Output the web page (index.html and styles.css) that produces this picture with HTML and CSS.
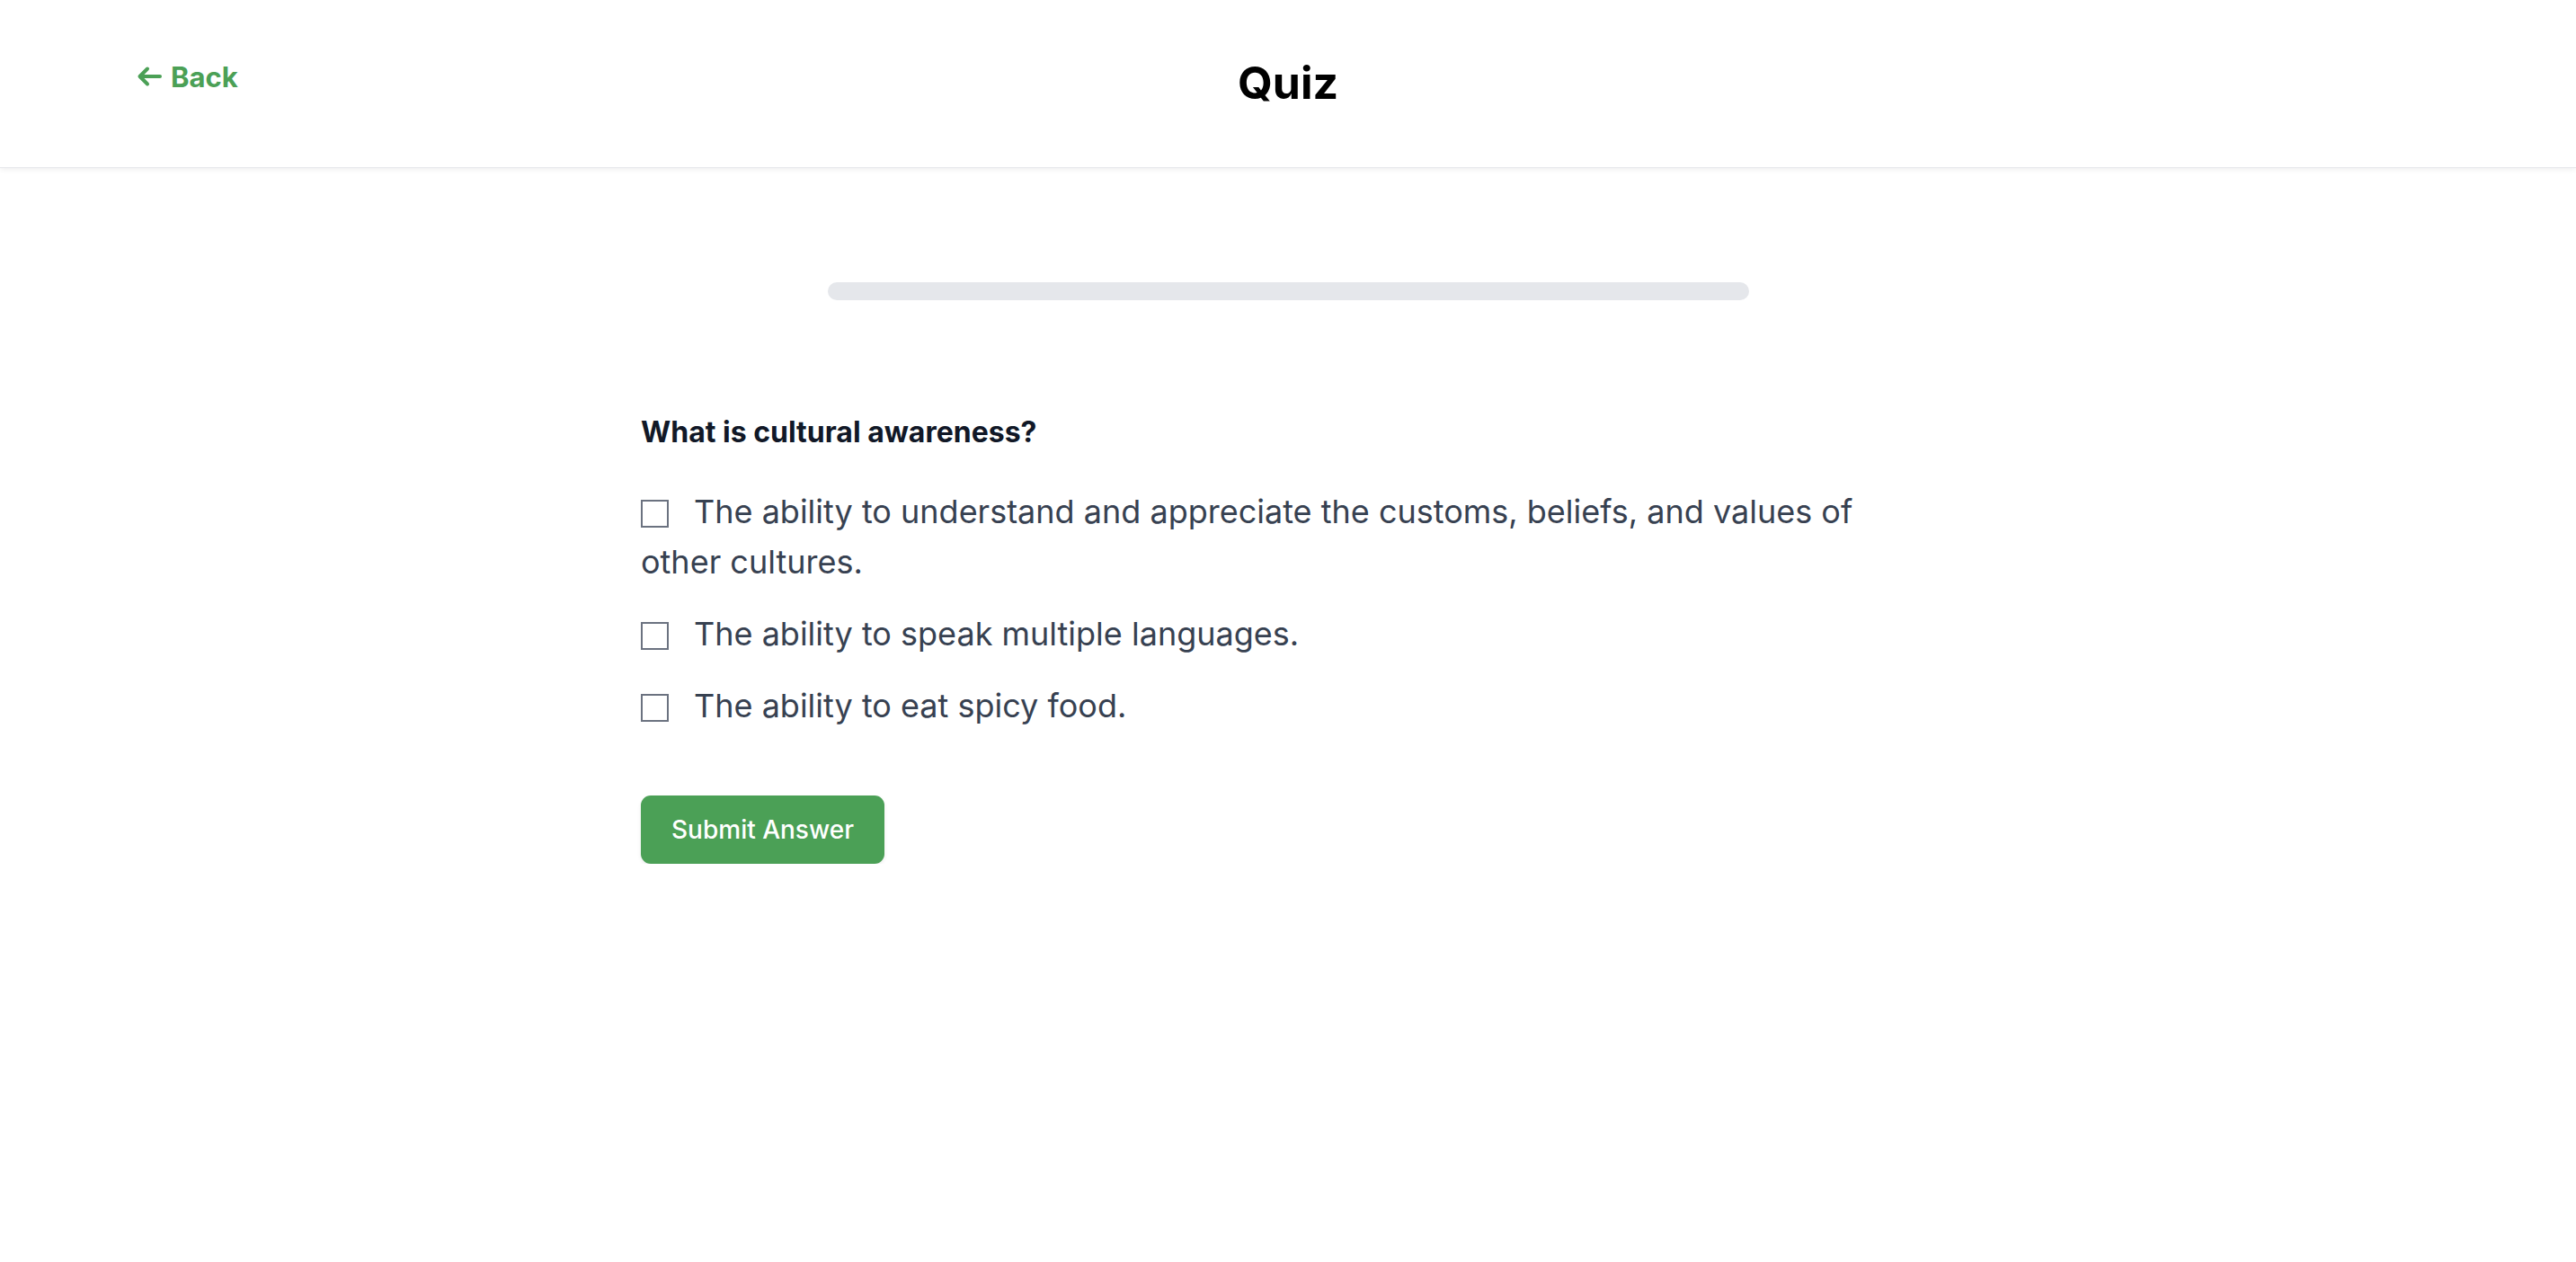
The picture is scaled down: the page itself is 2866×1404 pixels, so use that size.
FILE: index.html
```html
<!DOCTYPE html>
<html lang="en">
<head>
<meta charset="utf-8">
<title>Quiz</title>
<link rel="stylesheet" href="styles.css">
</head>
<body>
<header class="topbar">
  <a class="back" href="#">
    <svg class="back-icon" viewBox="0 0 28 24" width="28" height="24" aria-hidden="true">
      <path d="M26 12H4M12 3.5L3.5 12L12 20.5" fill="none" stroke="currentColor" stroke-width="4" stroke-linecap="round" stroke-linejoin="round"/>
    </svg>
    <span>Back</span>
  </a>
  <h1 class="title">Quiz</h1>
  <div class="spacer"></div>
</header>
<main class="content">
  <div class="progress"><div class="progress-fill" style="width:0%"></div></div>
  <section class="quiz">
    <h2 class="question">What is cultural awareness?</h2>
    <label class="option"><span class="box"></span>The ability to understand and appreciate the customs, beliefs, and values of other cultures.</label>
    <label class="option"><span class="box"></span>The ability to speak multiple languages.</label>
    <label class="option"><span class="box"></span>The ability to eat spicy food.</label>
    <button class="submit" type="button">Submit Answer</button>
  </section>
</main>
</body>
</html>
```

FILE: styles.css
```css
html, body {
  margin: 0;
  padding: 0;
  background: #ffffff;
  font-family: Inter, "Noto Sans", "Liberation Sans", sans-serif;
}

.topbar {
  display: grid;
  grid-template-columns: 1fr auto 1fr;
  align-items: start;
  height: 187px;
  box-sizing: border-box;
  padding: 0 150px 0 150px;
  border-bottom: 1px solid #e5e7eb;
  box-shadow: 0 2px 6px rgba(0, 0, 0, 0.06);
}

.back {
  display: inline-flex;
  align-items: center;
  gap: 10px;
  justify-self: start;
  margin-top: 61px;
  height: 48px;
  color: #4ba056;
  font-size: 31px;
  font-weight: 700;
  text-decoration: none;
  padding-left: 2px;
}

.back-icon {
  display: block;
}

.title {
  margin: 53px 0 0 0;
  font-size: 50px;
  line-height: 78px;
  font-weight: 700;
  color: #000000;
}

.content {
  display: flex;
  flex-direction: column;
  align-items: center;
  padding-top: 127px;
}

.progress {
  width: 1025px;
  height: 20px;
  border-radius: 10px;
  background: #e5e7eb;
  overflow: hidden;
}

.progress-fill {
  height: 100%;
  background: #4ba056;
}

.quiz {
  width: 1440px;
  margin-top: 124px;
  box-sizing: border-box;
}

.question {
  margin: 0 0 38px 0;
  font-size: 32px;
  line-height: 45px;
  font-weight: 700;
  color: #111827;
}

.option {
  display: block;
  margin-bottom: 24px;
  font-size: 36px;
  line-height: 56px;
  color: #374151;
}

.box {
  display: inline-block;
  width: 31px;
  height: 31px;
  box-sizing: border-box;
  border: 2px solid #6b7280;
  margin-right: 28px;
  vertical-align: -5px;
}

.submit {
  margin-top: 48px;
  width: 271px;
  height: 76px;
  border: none;
  border-radius: 11px;
  background: #4ba056;
  color: #ffffff;
  font-family: Inter, "Noto Sans", "Liberation Sans", sans-serif;
  font-size: 28px;
  font-weight: 500;
  box-shadow: 0 2px 4px rgba(0, 0, 0, 0.08);
}
```
